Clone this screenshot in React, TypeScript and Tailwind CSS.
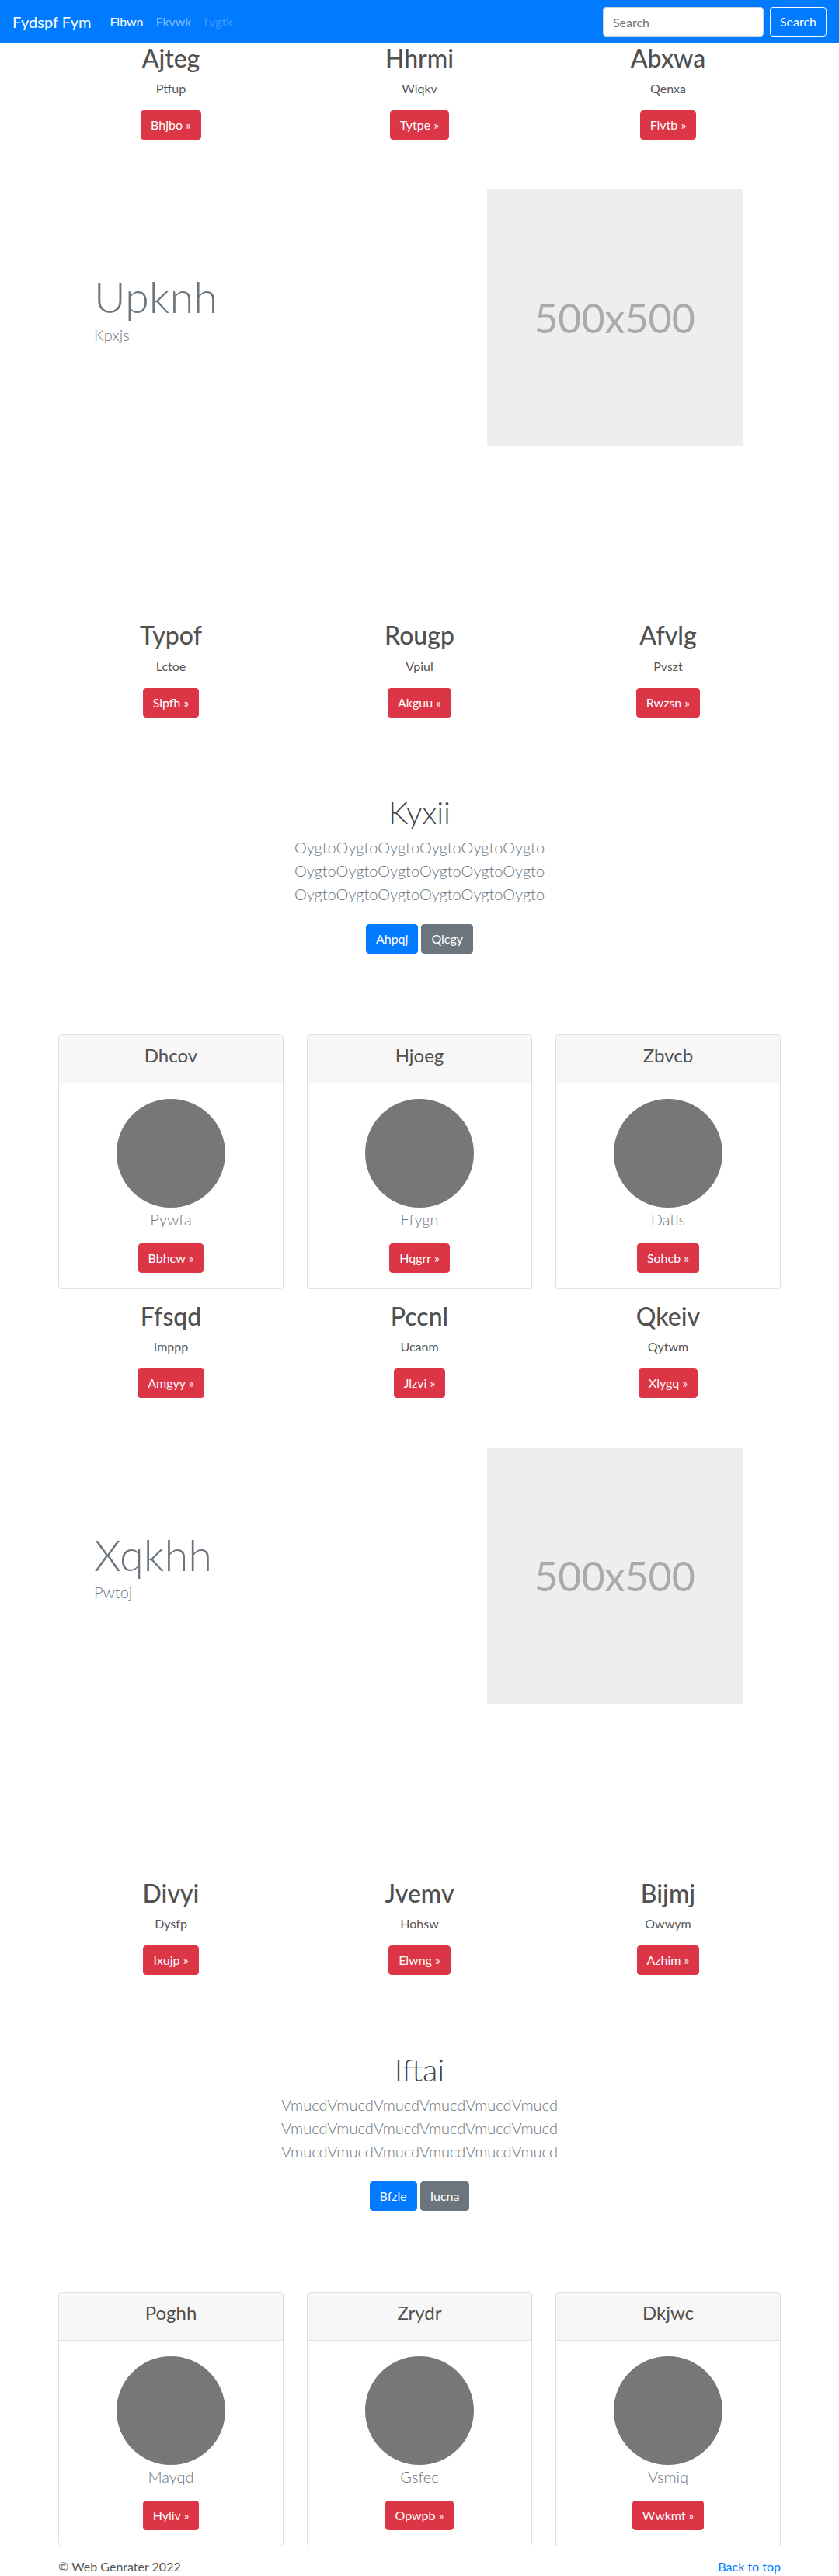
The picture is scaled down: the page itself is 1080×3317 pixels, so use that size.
import React from "react";

type Col = { title: string; sub: string; btn: string };

const topCols: Col[] = [
  { title: "Ajteg", sub: "Ptfup", btn: "Bhjbo" },
  { title: "Hhrmi", sub: "Wiqkv", btn: "Tytpe" },
  { title: "Abxwa", sub: "Qenxa", btn: "Flvtb" },
];
const cols2: Col[] = [
  { title: "Typof", sub: "Lctoe", btn: "Slpfh" },
  { title: "Rougp", sub: "Vpiul", btn: "Akguu" },
  { title: "Afvlg", sub: "Pvszt", btn: "Rwzsn" },
];
const cols3: Col[] = [
  { title: "Ffsqd", sub: "Imppp", btn: "Amgyy" },
  { title: "Pccnl", sub: "Ucanm", btn: "Jlzvi" },
  { title: "Qkeiv", sub: "Qytwm", btn: "Xlygq" },
];
const cols4: Col[] = [
  { title: "Divyi", sub: "Dysfp", btn: "Ixujp" },
  { title: "Jvemv", sub: "Hohsw", btn: "Elwng" },
  { title: "Bijmj", sub: "Owwym", btn: "Azhim" },
];

const cards1: Col[] = [
  { title: "Dhcov", sub: "Pywfa", btn: "Bbhcw" },
  { title: "Hjoeg", sub: "Efygn", btn: "Hqgrr" },
  { title: "Zbvcb", sub: "Datls", btn: "Sohcb" },
];
const cards2: Col[] = [
  { title: "Poghh", sub: "Mayqd", btn: "Hyliv" },
  { title: "Zrydr", sub: "Gsfec", btn: "Opwpb" },
  { title: "Dkjwc", sub: "Vsmiq", btn: "Wwkmf" },
];

function RedButton({ label }: { label: string }) {
  return (
    <button className="inline-block px-3 py-[6px] text-base leading-6 text-white bg-[#dc3545] border border-[#dc3545] rounded">
      {label} »
    </button>
  );
}

function Columns({ items, className = "" }: { items: Col[]; className?: string }) {
  return (
    <div className={`grid grid-cols-3 gap-[30px] text-center ${className}`}>
      {items.map((c) => (
        <div key={c.title}>
          <h2 className="text-[32px] leading-[1.2] font-medium text-[#505050] mb-2">{c.title}</h2>
          <p className="text-base leading-6 text-[#555] mb-4">{c.sub}</p>
          <RedButton label={c.btn} />
        </div>
      ))}
    </div>
  );
}

function Featurette({ title, sub }: { title: string; sub: string }) {
  return (
    <div className="mt-16 flex">
      <div className="flex-1 pl-[46px] pt-[104px]">
        <h2 className="text-[56px] leading-[1.2] font-light text-[#6c757d]">{title}</h2>
        <p className="text-xl leading-[30px] font-light text-[#6c757d]">{sub}</p>
      </div>
      <div className="w-[329px] h-[330px] mr-[49px] bg-[#eeeeee] flex items-center justify-center text-[52px] text-[#aaaaaa]">
        500x500
      </div>
    </div>
  );
}

function Jumbo({ title, word, primary, secondary }: { title: string; word: string; primary: string; secondary: string }) {
  const line = word.repeat(6);
  return (
    <div className="mt-[98px] text-center">
      <h1 className="text-[40px] leading-[1.2] font-light text-[#444] mb-[6px]">{title}</h1>
      <p className="text-xl leading-[30px] font-light text-[#6c757d] mb-6">
        <span className="block">{line}</span>
        <span className="block">{line}</span>
        <span className="block">{line}</span>
      </p>
      <div className="flex justify-center gap-1">
        <button className="px-3 py-[6px] text-base leading-6 text-white bg-[#007bff] border border-[#007bff] rounded">
          {primary}
        </button>
        <button className="px-3 py-[6px] text-base leading-6 text-white bg-[#6c757d] border border-[#6c757d] rounded">
          {secondary}
        </button>
      </div>
    </div>
  );
}

function Cards({ items, className = "" }: { items: Col[]; className?: string }) {
  return (
    <div className={`grid grid-cols-3 gap-[30px] text-center ${className}`}>
      {items.map((c) => (
        <div key={c.title} className="border border-[#dfdfdf] rounded overflow-hidden">
          <div className="bg-[#f7f7f7] border-b border-[#dfdfdf] px-5 pt-3 pb-3">
            <h4 className="text-2xl leading-[1.2] font-normal text-[#505050] mb-2">{c.title}</h4>
          </div>
          <div className="p-5 flex flex-col items-center">
            <div className="w-[140px] h-[140px] rounded-full bg-[#777777]" />
            <p className="text-xl leading-[30px] font-light text-[#6c757d] mb-4">{c.sub}</p>
            <RedButton label={c.btn} />
          </div>
        </div>
      ))}
    </div>
  );
}

function Container({ children }: { children: React.ReactNode }) {
  return <div className="w-[960px] mx-auto px-[15px]">{children}</div>;
}

export default function App() {
  return (
    <div className="min-h-screen bg-white font-['Lato','Segoe_UI',sans-serif] text-[#212529]">
      {/* Navbar */}
      <nav className="h-14 bg-[#007bff] px-4 flex items-center justify-between">
        <div className="flex items-center">
          <span className="text-xl leading-[30px] text-white mr-4">Fydspf Fym</span>
          <a className="px-2 text-base leading-6 text-white">Flbwn</a>
          <a className="px-2 text-base leading-6 text-white/50">Fkvwk</a>
          <a className="px-2 text-base leading-6 text-white/25">Lvgtk</a>
        </div>
        <form className="flex items-center gap-2">
          <input
            type="text"
            placeholder="Search"
            className="w-[207px] h-[38px] px-3 rounded border border-[#ced4da] bg-white text-base text-[#495057] placeholder:text-[#6c757d] outline-none"
          />
          <button type="button" className="h-[38px] px-3 rounded border border-white text-base text-white">
            Search
          </button>
        </form>
      </nav>

      <Container>
        <Columns items={topCols} />
        <Featurette title="Upknh" sub="Kpxjs" />
      </Container>

      <div className="mt-[144px] border-t border-[#e5e5e5]" />

      <Container>
        <Columns items={cols2} className="mt-[80px]" />
        <Jumbo title="Kyxii" word="Oygto" primary="Ahpqj" secondary="Qlcgy" />
        <Cards items={cards1} className="mt-[104px]" />
        <Columns items={cols3} className="mt-4" />
        <Featurette title="Xqkhh" sub="Pwtoj" />
      </Container>

      <div className="mt-[144px] border-t border-[#e5e5e5]" />

      <Container>
        <Columns items={cols4} className="mt-[80px]" />
        <Jumbo title="Iftai" word="Vmucd" primary="Bfzle" secondary="Iucna" />
        <Cards items={cards2} className="mt-[104px]" />
        <footer className="pt-[14px] pb-4 flex justify-between text-base leading-6">
          <p className="text-[#555]">© Web Genrater 2022</p>
          <a className="text-[#007bff]">Back to top</a>
        </footer>
      </Container>
    </div>
  );
}
